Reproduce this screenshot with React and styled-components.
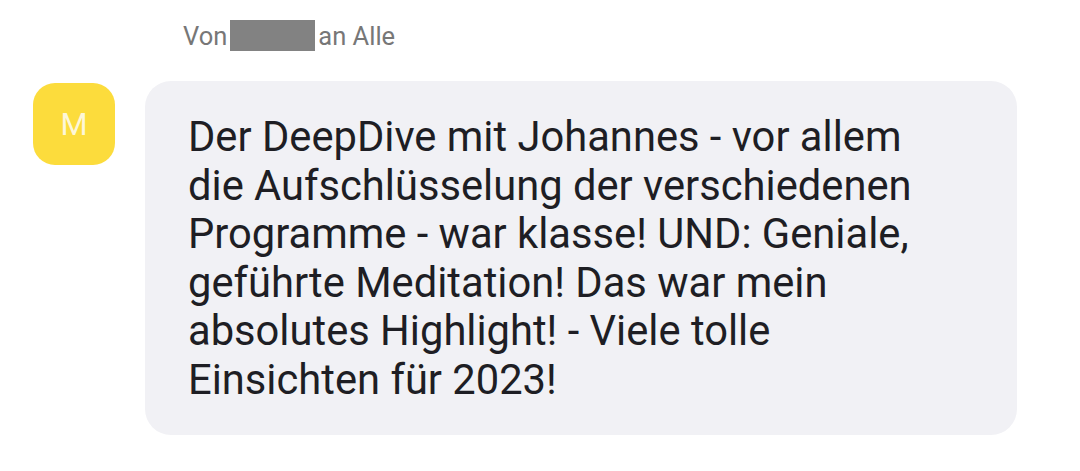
import React from "react";
import styled, { createGlobalStyle } from "styled-components";

const Global = createGlobalStyle`
  html, body { margin: 0; padding: 0; background: #ffffff; }
  body { font-family: Roboto, "Noto Sans", sans-serif; }
`;

const Page = styled.div`
  width: 1080px;
  height: 471px;
  box-sizing: border-box;
  padding: 20px 0 0 33px;
  display: flex;
  flex-direction: column;
`;

const Header = styled.div`
  display: flex;
  align-items: center;
  gap: 3px;
  margin-left: 150px;
  height: 31px;
  font-size: 25.5px;
  color: #777777;
`;

const Redacted = styled.span`
  display: inline-block;
  width: 85px;
  height: 31px;
  background: #828282;
`;

const MessageRow = styled.div`
  display: flex;
  align-items: flex-start;
  gap: 30px;
  margin-top: 30px;
`;

const Avatar = styled.div`
  width: 82px;
  height: 82px;
  flex: none;
  border-radius: 22px;
  background: #fcdc3c;
  color: #fdf7d8;
  display: flex;
  align-items: center;
  justify-content: center;
  font-size: 31px;
  margin-top: 2px;
`;

const Bubble = styled.div`
  width: 872px;
  height: 354px;
  box-sizing: border-box;
  border-radius: 26px;
  background: #f1f1f5;
  padding: 32px 20px 0 43px;
  font-size: 41.7px;
  line-height: 48.5px;
  color: #1e1e24;
  white-space: nowrap;
`;

export default function App() {
  return (
    <>
      <Global />
      <Page>
        <Header>
          <span>Von</span>
          <Redacted />
          <span>an Alle</span>
        </Header>
        <MessageRow>
          <Avatar>M</Avatar>
          <Bubble>
            Der DeepDive mit Johannes - vor allem
            <br />
            die Aufschlüsselung der verschiedenen
            <br />
            Programme - war klasse! UND: Geniale,
            <br />
            geführte Meditation! Das war mein
            <br />
            absolutes Highlight! - Viele tolle
            <br />
            Einsichten für 2023!
          </Bubble>
        </MessageRow>
      </Page>
    </>
  );
}
